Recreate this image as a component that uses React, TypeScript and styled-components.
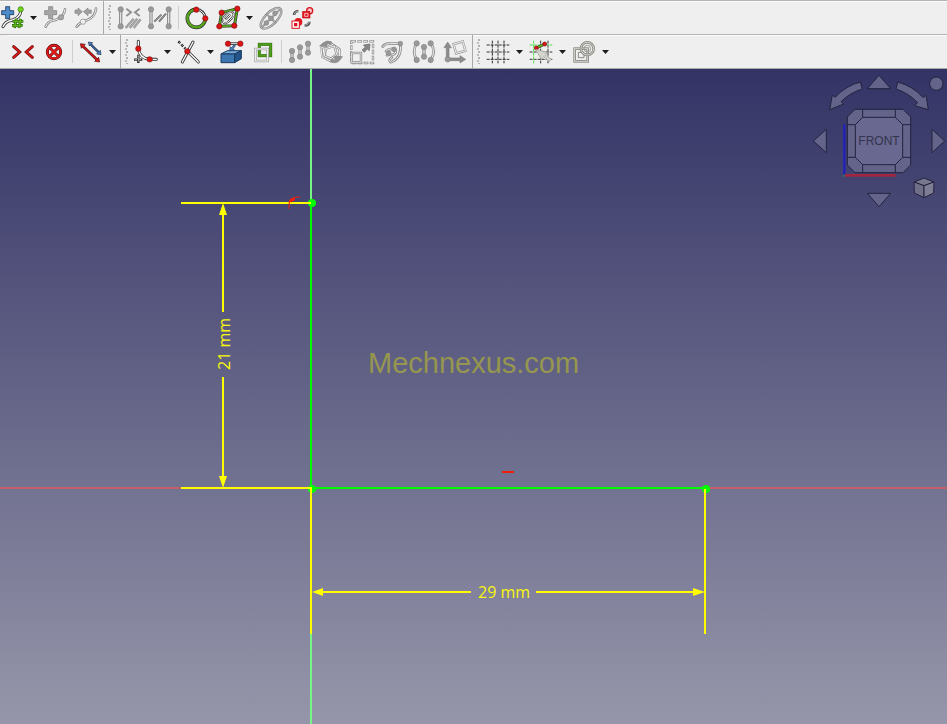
import React from "react";
import styled, { createGlobalStyle } from "styled-components";

const GlobalStyle = createGlobalStyle`
  html, body, #root { height: 100%; }
  body { margin: 0; overflow: hidden; font-family: "Liberation Sans", Arial, sans-serif; }
`;

const Window = styled.main`
  display: flex;
  flex-direction: column;
  height: 100%;
`;

const ToolArea = styled.header`
  flex: none;
  border-bottom: 1px solid #a9a9a9;
  background: #efefef;
  overflow: hidden;
`;

const ToolRow = styled.div`
  display: flex;
  height: 34px;
  box-sizing: border-box;
  border-top: 1px solid #b4b4b4;
`;

const Group = styled.div<{ $lead?: number; $last?: boolean }>`
  display: flex;
  flex: ${(p) => (p.$last ? "1 0 auto" : "none")};
  margin-left: ${(p) => p.$lead ?? 0}px;
  padding-right: 2px;
  box-shadow: inset 0 1px #fcfcfc;
  border-right: ${(p) => (p.$last ? "0" : "1px solid #a9a9a9")};
`;

const Grip = styled.span`
  width: 4px;
  margin: 4px 2px 4px 3px;
  background:
    radial-gradient(circle at 3px 1px, #b2b2b2 1px, transparent 1px) 0 0 / 4px 6px,
    radial-gradient(circle at 2px 1px, #bcbcbc 1px, transparent 1px) 0 3px / 4px 6px;
`;

const Separator = styled.span`
  width: 1px;
  margin: 5px 2px 5px 3px;
  background: #cecece;
`;

const ToolButton = styled.button<{ $menu?: boolean }>`
  display: flex;
  align-items: flex-start;
  flex: none;
  width: ${(p) => (p.$menu ? 43 : 31)}px;
  height: 33px;
  padding: 5px 0 0 4px;
  border: 0;
  background: transparent;
`;

const IconSvg = styled.svg`
  flex: none;
  display: block;
  width: 24px;
  height: 24px;
  overflow: visible;
`;

const Caret = styled.span`
  width: 7px;
  height: 4px;
  margin: 10px 0 0 6px;
  background: #1c1c1c;
  clip-path: polygon(0 0, 100% 0, 50% 100%);
`;

const Viewport = styled.section`
  position: relative;
  flex: 1;
  min-height: 0;
  overflow: hidden;
  background: linear-gradient(#333366, #9696aa);
`;

const SketchSvg = styled.svg`
  display: block;
  width: 100%;
  height: 100%;
`;

const DimensionText = styled.text`
  font: 16px "Open Sans", "Noto Sans", sans-serif;
  fill: #f8f80c;
`;

const Watermark = styled.text`
  font: 29px "Liberation Sans", Arial, sans-serif;
  fill: #96964f;
`;

const NavigationSvg = styled.svg`
  position: absolute;
  top: 0;
  right: 0;
  width: 147px;
  height: 147px;
`;

const FaceText = styled.text`
  font: 36px "Liberation Sans", Arial, sans-serif;
  fill: #34344f;
`;

type Pt = [number, number];
const GREY = "#999999";
const RED = "#e01414";

const Dot = ({ at, r = 7, fill = RED, edge }: { at: Pt; r?: number; fill?: string; edge?: string }) => (
  <circle cx={at[0]} cy={at[1]} r={r} fill={fill} stroke={edge ?? (fill === GREY ? "#858585" : "#7c1010")} strokeWidth="2" />
);

const Tube = ({ d, inner = "#fff", outer = "#333", w = 9, core = 4 }: { d: string; inner?: string; outer?: string; w?: number; core?: number }) => (
  <g fill="none" strokeLinecap="round" strokeLinejoin="round">
    <path d={d} stroke={outer} strokeWidth={w} />
    <path d={d} stroke={inner} strokeWidth={core} />
  </g>
);

const GreyTube = ({ d, w = 8 }: { d: string; w?: number }) => <Tube d={d} outer="#8e8e8e" inner="#f2f2f2" w={w} core={3} />;

const Plus = ({ fill, edge }: { fill: string; edge: string }) => (
  <path d="M17 2H29V14H41V26H29V38H17V26H5V14H17Z" fill={fill} stroke={edge} strokeWidth="2.5" />
);

const Dumbbell = ({ x, a, b }: { x: number; a: number; b: number }) => (
  <g>
    <GreyTube d={`M${x} ${a}V${b}`} w={10} />
    <Dot at={[x, a]} fill={GREY} r={8} />
    <Dot at={[x, b]} fill={GREY} r={8} />
  </g>
);

const GRID = "M19 2V70M36 2V70M54 2V70M2 15H70M2 36H70M2 58H70";

const icons: Record<string, React.ReactNode> = {
  insertKnot: (
    <>
      <Tube d="M9 62C18 42 30 46 42 40C56 34 62 26 62 14" />
      <Plus fill="#4d8ccb" edge="#18385f" />
      <g fill="none" strokeLinecap="butt">
        <path d="M49 38L44 66M62 38L57 66M38 46H70M36 58H68" stroke="#246b0b" strokeWidth="8" />
        <path d="M49 39L44 65M62 39L57 65M39 46H69M37 58H67" stroke="#62b41c" strokeWidth="4" />
      </g>
      <Dot at={[62, 10]} r={8} fill="#73d21b" edge="#33760c" />
    </>
  ),
  addKnot: (
    <>
      <GreyTube d="M8 62C18 40 30 46 42 40C56 34 64 26 66 10" />
      <Plus fill="#a5a5a5" edge="#858585" />
      <Dot at={[54, 34]} r={8} fill="#a5a5a5" edge="#858585" />
    </>
  ),
  joinCurves: (
    <>
      <GreyTube d="M8 62C18 48 26 48 40 42C56 36 64 26 66 8" />
      <path d="M3 12H12V6L25 17L12 29V22H3ZM52 12H42V6L28 17L42 29V22H52Z" fill="#a0a0a0" stroke="#878787" strokeWidth="2" />
      <Dot at={[27, 47]} r={8} fill="#efefef" edge="#858585" />
    </>
  ),
  constrainSelect: (
    <>
      <Dumbbell x={11} a={10} b={61} />
      <path d="M28 8L42 19L28 30M68 8L54 19L68 30" fill="none" stroke="#929292" strokeWidth="6" />
      <path d="M26 66L50 38M38 66L61 38M50 66L71 40" stroke="#929292" strokeWidth="7" />
      <path d="M26 66L50 38M38 66L61 38M50 66L71 40" stroke="#c4c4c4" strokeWidth="2" />
    </>
  ),
  constrainParallel: (
    <>
      <Dumbbell x={9} a={10} b={61} />
      <Dumbbell x={62} a={10} b={61} />
      <path d="M19 47L40 26M33 47L54 23" stroke="#6c6c6c" strokeWidth="6" />
      <path d="M19 47L40 26M33 47L54 23" stroke="#a5a5a5" strokeWidth="2" />
    </>
  ),
  periodicSpline: (
    <>
      <Tube d="M34 10A27 27 0 1 0 61 37" inner="#55a51a" w={11} core={7} />
      <Tube d="M34 10A27 27 0 0 1 61 37" w={8} core={3} />
      <Dot at={[34, 11]} r={8} />
      <Dot at={[61, 37]} r={8} />
    </>
  ),
  polygonSpline: (
    <>
      <Tube d="M17 20L64 8L55 59L10 61Z" inner="#58aa1c" w={9} core={5} />
      <path d="M22 49C15 42 32 18 42 18C55 16 56 28 48 36C42 42 30 58 22 49Z" fill="#efefef" />
      <Tube d="M22 49C15 42 32 18 42 18C55 16 56 28 48 36C42 42 30 58 22 49Z" w={6} core={3} />
      <Tube d="M30 38L41 28" w={6} core={3} />
      <Dot at={[17, 20]} r={8} /><Dot at={[64, 8]} r={8} /><Dot at={[55, 59]} r={8} /><Dot at={[10, 61]} r={8} />
    </>
  ),
  ellipseGeometry: (
    <>
      <g transform="rotate(-45 36 37)">
        <ellipse cx="36" cy="37" rx="40" ry="18" fill="none" stroke="#8a8a8a" strokeWidth="7" />
        <ellipse cx="36" cy="37" rx="40" ry="18" fill="none" stroke="#dddddd" strokeWidth="2" />
        <Tube d="M0 37H72M36 19V55" outer="#8a8a8a" inner="#cfcfcf" w={6} core={2} />
      </g>
      <Dot at={[36, 37]} fill={GREY} /><Dot at={[48, 22]} fill={GREY} /><Dot at={[22, 51]} fill={GREY} />
    </>
  ),
  switchSpace: (
    <>
      <circle cx="59" cy="14" r="9" fill="#f8b9bb" stroke="#d9121b" strokeWidth="4" />
      <rect x="38" y="16" width="22" height="20" fill="#e01720" stroke="#cc0e18" strokeWidth="2" />
      <path d="M44 22H54V31H44ZM58 10A6 6 0 0 1 61 20" fill="none" stroke="#fff" strokeWidth="2" />
      <circle cx="25" cy="48" r="12" fill="#e01720" />
      <rect x="6" y="45" width="22" height="22" fill="#fff" stroke="#d9121b" strokeWidth="3" />
      <rect x="12" y="51" width="10" height="10" fill="#e01720" />
      <path d="M12 27Q13 16 25 15M58 47Q58 58 44 58" fill="none" stroke="#555" strokeWidth="8" />
      <path d="M12 25Q14 17 25 15M58 48Q56 56 44 58" fill="none" stroke="#aaa" strokeWidth="3" />
    </>
  ),
  closeShape: (
    <>
      <path d="M8 20L26 36L8 52M64 20L46 36L64 52" fill="none" stroke="#651010" strokeWidth="9" strokeLinecap="round" />
      <path d="M8 20L26 36L8 52M64 20L46 36L64 52" fill="none" stroke="#df1717" strokeWidth="5" strokeLinecap="round" />
    </>
  ),
  connectShape: (
    <>
      <g fill="none" stroke="#651010" strokeWidth="9"><circle cx="36" cy="36" r="20" /><path d="M24 24L48 48M48 24L24 48" /></g>
      <g fill="none" stroke="#e21818" strokeWidth="5"><circle cx="36" cy="36" r="20" /><path d="M22 22L50 50M50 22L22 50" /></g>
      <circle cx="36" cy="36" r="6" fill="#e21818" />
    </>
  ),
  selectLines: (
    <>
      <path d="M11 18L55 60" stroke="#551010" strokeWidth="8" />
      <path d="M4 11L19 13L7 25ZM62 66L47 64L59 52Z" fill="#dd1717" stroke="#551010" strokeWidth="2" />
      <path d="M11 18L55 60" stroke="#d81717" strokeWidth="4" />
      <path d="M35 13L60 38" stroke="#1c3154" strokeWidth="7" />
      <path d="M28 6L41 8L31 18ZM66 44L53 42L64 31Z" fill="#4f82c1" stroke="#1c3154" strokeWidth="2" />
      <path d="M35 13L60 38" stroke="#4f82c1" strokeWidth="3" />
    </>
  ),
  fillet: (
    <>
      <Tube d="M13 4V25C15 45 29 56 46 58H67" />
      <Dot at={[13, 26]} r={8} /><Dot at={[47, 58]} r={8} />
      <path d="M13 44V72M0 59H28" stroke="#222" strokeWidth="7" strokeDasharray="11 3" />
      <path d="M13 46V70M2 59H26" stroke="#fff" strokeWidth="2" strokeDasharray="7 5" />
    </>
  ),
  trim: (
    <>
      <Tube d="M48 6L16 66M31 33L64 66" />
      <path d="M4 4L25 26" stroke="#222" strokeWidth="7" strokeDasharray="8 5" />
      <path d="M6 6L24 25" stroke="#eee" strokeWidth="2" strokeDasharray="4 9" />
      <Dot at={[31, 34]} r={8} />
    </>
  ),
  externalGeometry: (
    <>
      <path d="M3 42L22 32H64L44 42Z" fill="#76aad8" stroke="#18385f" strokeWidth="3" />
      <path d="M3 42H44V68H3Z" fill="#3c77b2" stroke="#18385f" strokeWidth="3" />
      <path d="M44 42L64 32V56L44 68Z" fill="#245488" stroke="#18385f" strokeWidth="3" />
      <path d="M40 14C40 19 37 21 34 23L31 20L29 32L43 30L39 26C44 22 46 18 46 14Z" fill="#4b86c0" stroke="#18385f" strokeWidth="2" />
      <path d="M24 11H61" stroke="#343434" strokeWidth="8" /><path d="M24 11H61" stroke="#eee" strokeWidth="3" />
      <Dot at={[24, 11]} r={8} /><Dot at={[61, 11]} r={8} />
    </>
  ),
  carbonCopy: (
    <g fill="none">
      <rect x="25" y="13" width="34" height="34" stroke="#326a10" strokeWidth="9" />
      <rect x="25" y="13" width="34" height="34" stroke="#4f9e1b" strokeWidth="6" />
      <rect x="13" y="27" width="37" height="36" stroke="#8d8d8d" strokeWidth="7" />
      <rect x="13" y="27" width="37" height="36" stroke="#eeeeee" strokeWidth="4" />
    </g>
  ),
  translateCopy: <><Dumbbell x={12} a={33} b={60} /><Dumbbell x={36} a={22} b={50} /><Dumbbell x={60} a={11} b={38} /></>,
  rotateCopy: (
    <>
      <GreyTube d="M7 24L35 10L62 28L61 52L35 64L10 50Z" w={7} />
      <GreyTube d="M20 26L46 18L53 43L36 56L17 48Z" w={7} />
      <path d="M2 18L12 9Q24 -1 38 6L35 12Q27 9 20 14L24 19ZM70 50L62 61Q51 73 35 65L37 60Q47 62 50 56L45 49Z" fill="#929292" stroke="#7b7b7b" strokeWidth="2" />
    </>
  ),
  scale: (
    <>
      <rect x="4" y="4" width="65" height="65" fill="none" stroke="#888" strokeWidth="7" strokeDasharray="14 4" />
      <rect x="4" y="4" width="65" height="65" fill="none" stroke="#eee" strokeWidth="3" strokeDasharray="10 8" strokeDashoffset="-2" />
      <rect x="5" y="39" width="28" height="28" fill="#efefef" stroke="#858585" strokeWidth="7" />
      <rect x="5" y="39" width="28" height="28" fill="none" stroke="#e6e6e6" strokeWidth="3" />
      <path d="M36 30L46 21L40 15L60 12L58 32L52 27L43 37Z" fill="#858585" stroke="#6d6d6d" strokeWidth="2" />
    </>
  ),
  offset: (
    <>
      <GreyTube d="M5 20Q12 9 25 11H58C61 35 55 55 34 65C24 70 23 57 33 52" />
      <GreyTube d="M15 34Q25 23 43 28Q48 43 31 45Q21 43 18 46" />
      <Dot at={[58, 11]} fill={GREY} /><Dot at={[39, 28]} fill={GREY} /><Dot at={[23, 40]} fill={GREY} />
    </>
  ),
  symmetry: (
    <>
      <GreyTube d="M14 10Q-1 35 14 60M56 10Q74 35 56 60" />
      <Dot at={[14, 10]} fill={GREY} r={8} /><Dot at={[14, 60]} fill={GREY} r={8} />
      <Dot at={[56, 10]} fill={GREY} r={8} /><Dot at={[56, 60]} fill={GREY} r={8} />
      <Dumbbell x={36} a={21} b={50} />
    </>
  ),
  removeAlignment: (
    <>
      <g transform="rotate(-16 49 23)" fill="none"><rect x="35" y="8" width="29" height="29" stroke="#999" strokeWidth="7" /><rect x="35" y="8" width="29" height="29" stroke="#eee" strokeWidth="3" /></g>
      <path d="M10 58V23H3L14 6L25 23H18V54H51V47L68 58L51 69V62H14Z" fill="#8c8c8c" stroke="#7d7d7d" strokeWidth="2" />
      <Dot at={[14, 58]} r={8} fill={GREY} />
    </>
  ),
  grid: <path d={GRID} fill="none" stroke="#303030" strokeWidth="3" strokeDasharray="9 3" />,
  snap: (
    <>
      <path d="M35 2V70M57 2V70M2 36H70M2 58H70" stroke="#353535" strokeWidth="3" strokeDasharray="9 3" />
      <path d="M14 2V70M2 15H70" stroke="#45e445" strokeWidth="3" strokeDasharray="9 3" />
      <Tube d="M22 24L47 12" inner="#67b91f" w={9} core={5} />
      <Dot at={[22, 24]} r={6} /><Dot at={[47, 12]} r={6} />
      <path d="M20 28L57 38L48 44L67 58L61 65L44 50L37 59Z" fill="#d5d5cf" stroke="#9b9b93" strokeWidth="2" />
    </>
  ),
  renderOrder: (
    <g fill="none">
      <rect x="8" y="26" width="39" height="38" stroke="#888882" strokeWidth="8" />
      <rect x="8" y="26" width="39" height="38" stroke="#d8d8d2" strokeWidth="3" />
      <path d="M34 37H19V53H36V45" stroke="#888882" strokeWidth="3" />
      <circle cx="46" cy="26" r="19" stroke="#888882" strokeWidth="8" />
      <circle cx="46" cy="26" r="19" stroke="#d8d8d2" strokeWidth="3" />
      <circle cx="46" cy="26" r="10" stroke="#999993" strokeWidth="3" />
    </g>
  ),
};

const Tool = ({ icon, label, menu }: { icon: string; label: string; menu?: boolean }) => (
  <ToolButton type="button" aria-label={label} aria-haspopup={menu ? "menu" : undefined} $menu={menu}>
    <IconSvg viewBox="0 0 72 72" aria-hidden="true">{icons[icon]}</IconSvg>
    {menu && <Caret />}
  </ToolButton>
);

const NavigationCube = () => (
  <NavigationSvg viewBox="0 9 441 441" role="img" aria-label="Navigation cube, front view">
    <g fill="#64648b" stroke="#22223f" strokeWidth="3" strokeLinejoin="round">
      <path d="M237 28L272 68H202Z" />
      <path d="M202 382H272L237 422Z" />
      <path d="M40 225L79 190V260Z" />
      <path d="M396 190L434 225L396 260Z" />
      <circle cx="409" cy="53" r="20" />
      <path d="M181 48L187 69Q150 80 123 107L131 114L89 131L97 87L105 94Q138 59 181 48Z" />
      <path d="M293 48Q338 60 370 95L378 88L385 131L344 119L353 110Q325 81 288 69Z" />
      <path d="M165 130H309L332 153V297L309 320H165L142 297V153Z" />
      <path d="M188 154H286L308 176V274L286 296H188L166 274V176Z" fill="#686890" />
      <path d="M188 130V154M286 130V154M188 296V320M286 296V320M142 176H166M308 176H332M142 274H166M308 274H332" fill="none" />
      <path d="M342 348L372 336L402 348L372 359Z" fill="#77778e" />
      <path d="M342 348L372 359V395L343 381Z" fill="#6f6f87" />
      <path d="M402 348L372 359V395L401 381Z" fill="#7d7d93" />
    </g>
    <FaceText x="237" y="238" textAnchor="middle">FRONT</FaceText>
    <path d="M133 175V327" stroke="#2020ba" strokeWidth="7" />
    <path d="M134 328H287" stroke="#a12640" strokeWidth="8" />
    <rect x="129" y="326" width="6" height="6" fill="#31765c" />
  </NavigationSvg>
);

const Sketch = () => (
  <SketchSvg role="img" aria-label="Dimensioned sketch">
    <g strokeWidth="2" fill="none">
      <path d="M311 0V4000" stroke="#79f486" />
      <path d="M0 419H8000" stroke="#c45f68" />
      <path d="M311 134V419H705" stroke="#00fb00" />
    </g>
    <g fill="#00ff00">
      <circle cx="312" cy="134" r="4" />
      <circle cx="312" cy="420" r="4" />
      <circle cx="706" cy="420" r="4" />
    </g>
    <g strokeWidth="2" fill="none" stroke="#ffff00">
      <path d="M181 134H311M181 419H312M311 419V565M705 420V565" />
      <path d="M223 138V243M223 308V416M315 523H471M536 523H702" />
    </g>
    <path d="M223 134L227 146H219ZM223 419L219 407H227ZM312 523L323 519V527ZM705 523L693 519V527Z" fill="#ffff00" />
    <g fill="none" stroke="#f02008">
      <path d="M289 140V135Q289 128 300 128" strokeWidth="1" />
      <path d="M290 133Q291 130 295 130" strokeWidth="3" />
      <path d="M502 403H514" strokeWidth="2" />
    </g>
    <Watermark x="368" y="304">Mechnexus.com</Watermark>
    <DimensionText x="478" y="529">29 mm</DimensionText>
    <DimensionText transform="translate(230 301) rotate(-90)">21 mm</DimensionText>
  </SketchSvg>
);

export default function App() {
  return (
    <Window>
      <GlobalStyle />
      <ToolArea>
        <ToolRow role="toolbar" aria-label="Splines and constraints">
          <Group $lead={-4}>
            <Tool icon="insertKnot" label="Modify knot" menu />
            <Tool icon="addKnot" label="Insert knot" />
            <Tool icon="joinCurves" label="Join curves" />
          </Group>
          <Group $last>
            <Grip />
            <Tool icon="constrainSelect" label="Select constraints" />
            <Tool icon="constrainParallel" label="Select elements" />
            <Separator />
            <Tool icon="periodicSpline" label="Internal circle" />
            <Tool icon="polygonSpline" label="Internal geometry" menu />
            <Tool icon="ellipseGeometry" label="Ellipse geometry" />
            <Tool icon="switchSpace" label="Switch virtual space" />
          </Group>
        </ToolRow>
        <ToolRow role="toolbar" aria-label="Sketch tools">
          <Group $lead={7}>
            <Tool icon="closeShape" label="Select conflicts" />
            <Tool icon="connectShape" label="Select redundant" />
            <Separator />
            <Tool icon="selectLines" label="Select lines" menu />
          </Group>
          <Group>
            <Grip />
            <Tool icon="fillet" label="Fillet" menu />
            <Tool icon="trim" label="Trim" menu />
            <Tool icon="externalGeometry" label="External geometry" />
            <Tool icon="carbonCopy" label="Carbon copy" />
            <Separator />
            <Tool icon="translateCopy" label="Move" />
            <Tool icon="rotateCopy" label="Rotate" />
            <Tool icon="scale" label="Scale" />
            <Tool icon="offset" label="Offset" />
            <Tool icon="symmetry" label="Symmetry" />
            <Tool icon="removeAlignment" label="Remove axes alignment" />
          </Group>
          <Group $last>
            <Grip />
            <Tool icon="grid" label="Grid" menu />
            <Tool icon="snap" label="Snap" menu />
            <Tool icon="renderOrder" label="Rendering order" menu />
          </Group>
        </ToolRow>
      </ToolArea>
      <Viewport>
        <Sketch />
        <NavigationCube />
      </Viewport>
    </Window>
  );
}
